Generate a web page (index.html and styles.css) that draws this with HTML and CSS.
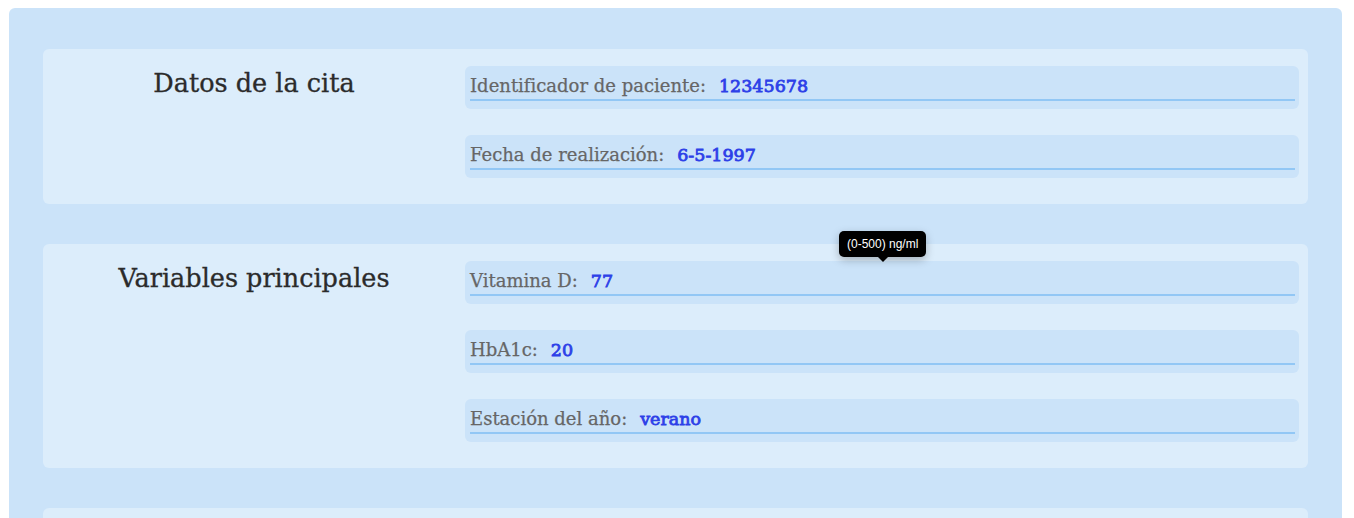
FILE: index.html
```html
<!DOCTYPE html>
<html lang="es">
<head>
<meta charset="utf-8">
<title>Cita</title>
<link rel="stylesheet" href="styles.css">
</head>
<body>
<div class="page">
  <section class="card">
    <div class="card-title"><h2>Datos de la cita</h2></div>
    <div class="fields">
      <div class="field"><div class="field-inner"><span class="label">Identificador de paciente:</span><span class="value">12345678</span></div></div>
      <div class="field"><div class="field-inner"><span class="label">Fecha de realización:</span><span class="value">6-5-1997</span></div></div>
    </div>
  </section>
  <section class="card">
    <div class="card-title"><h2>Variables principales</h2></div>
    <div class="fields">
      <div class="field has-tip"><div class="field-inner"><span class="label">Vitamina D:</span><span class="value">77</span></div><div class="tooltip">(0-500) ng/ml</div></div>
      <div class="field"><div class="field-inner"><span class="label">HbA1c:</span><span class="value">20</span></div></div>
      <div class="field"><div class="field-inner"><span class="label">Estación del año:</span><span class="value">verano</span></div></div>
    </div>
  </section>
  <section class="card card-last">
    <div class="card-title"></div>
    <div class="fields"></div>
  </section>
</div>
</body>
</html>
```
FILE: styles.css
```css
html, body {
  margin: 0;
  padding: 0;
  background: #ffffff;
}
body {
  padding: 8px 12px 0 9px;
  font-family: "DejaVu Serif", serif;
  height: 518px;
  box-sizing: border-box;
  overflow: hidden;
}
.page {
  background: #cbe3f9;
  border-radius: 6px 6px 0 0;
  padding: 41px 34px 0 34px;
  height: 510px;
  box-sizing: border-box;
  display: flex;
  flex-direction: column;
  gap: 40px;
  overflow: hidden;
}
.card {
  background: #dcedfb;
  border-radius: 6px;
  display: flex;
  padding: 17px 9px 26px 0;
  flex: none;
}
.card-last {
  flex: 1;
  padding: 0;
  border-radius: 6px 6px 0 0;
}
.card-title {
  width: 422px;
  flex: none;
  text-align: center;
}
.card-title h2 {
  margin: 0;
  padding-top: 2px;
  font-size: 25.5px;
  font-weight: 400;
  color: #2b2b2b;
  -webkit-text-stroke: 0.3px #2b2b2b;
}
.fields {
  flex: 1;
  display: flex;
  flex-direction: column;
  gap: 26px;
}
.field {
  position: relative;
  background: #cbe3f9;
  border-radius: 6px;
  padding: 8px 4px 8px 5px;
}
.field-inner {
  border-bottom: 2px solid #92c7f5;
  box-sizing: border-box;
  height: 27px;
  display: flex;
  align-items: baseline;
  white-space: nowrap;
  line-height: 24px;
}
.label {
  font-size: 18px;
  color: #666666;
  margin-right: 13px;
  -webkit-text-stroke: 0.25px #666666;
}
.value {
  font-size: 17.5px;
  color: #2d40e8;
  -webkit-text-stroke: 0.8px #2d40e8;
}
.tooltip {
  position: absolute;
  left: 374px;
  top: -30px;
  background: #000;
  color: #fff;
  font-family: "Liberation Sans", Arial, sans-serif;
  font-size: 12px;
  line-height: 14px;
  padding: 6px 8px;
  border-radius: 5px;
  box-shadow: 0 3px 8px rgba(0,0,0,0.25);
}
.tooltip::after {
  content: "";
  position: absolute;
  left: 50%;
  bottom: -5px;
  margin-left: -5px;
  border-left: 5px solid transparent;
  border-right: 5px solid transparent;
  border-top: 5px solid #000;
}
```
